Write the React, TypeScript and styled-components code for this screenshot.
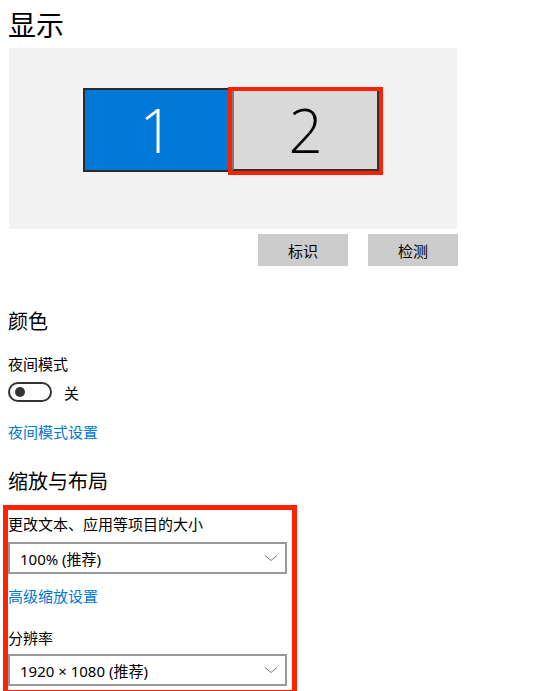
import React from 'react';
import styled, { createGlobalStyle } from 'styled-components';

const GlobalStyle = createGlobalStyle`
  html, body {
    margin: 0;
    padding: 0;
    background: #fff;
  }
  body {
    font-family: "Segoe UI", "Noto Sans", "Noto Sans CJK SC", sans-serif;
    color: #000;
  }
`;

const Page = styled.div`
  width: 550px;
  height: 691px;
  overflow: hidden;
  font-family: "Noto Sans", "Noto Sans CJK SC", sans-serif;
`;

const Title = styled.h1`
  margin: 0;
  padding: 7px 0 5px 8px;
  font-size: 28px;
  line-height: 36px;
  font-weight: 400;
`;

const Arrangement = styled.div`
  margin-left: 9px;
  width: 448px;
  height: 181px;
  box-sizing: border-box;
  padding: 39px 0 0 74px;
  background: #f2f2f2;
  display: flex;
  align-items: flex-start;
`;

const Monitor = styled.div<{ primary?: boolean }>`
  box-sizing: border-box;
  display: flex;
  align-items: center;
  justify-content: center;
  font-family: "Open Sans", "Noto Sans", sans-serif;
  font-weight: 300;
  font-size: 60px;
  line-height: 1;
  background: ${({ primary }) => (primary ? '#0078d7' : '#d9d9d9')};
  color: ${({ primary }) => (primary ? '#fff' : '#000')};
  ${({ primary }) =>
    primary
      ? `
    width: 145px;
    height: 84px;
    margin-top: 1px;
    border: 2px solid #2b2b2b;
    border-right: none;
  `
      : `
    width: 147px;
    height: 80px;
    border-left: 2px solid #7a7a7a;
    border-right: 2px solid #333;
    border-bottom: 2px solid #333;
  `}
`;

const Highlight = styled.div`
  border: 4px solid #ff2100;
  display: flex;
`;

const ButtonRow = styled.div`
  width: 458px;
  margin-top: 5px;
  display: flex;
  justify-content: flex-end;
  gap: 20px;
`;

const GrayButton = styled.button`
  width: 90px;
  height: 32px;
  border: none;
  padding: 0;
  background: #cccccc;
  font-family: "Noto Sans CJK SC", sans-serif;
  font-size: 15px;
  color: #000;
`;

const SectionTitle = styled.h2<{ gap: number }>`
  margin: ${({ gap }) => gap}px 0 0 8px;
  font-size: 20px;
  line-height: 28px;
  font-weight: 400;
  font-family: "Noto Sans CJK SC", sans-serif;
`;

const Label = styled.div<{ gap: number }>`
  margin: ${({ gap }) => gap}px 0 0 8px;
  font-size: 15px;
  line-height: 20px;
  font-family: "Noto Sans CJK SC", sans-serif;
`;

const Link = styled.a<{ gap: number }>`
  display: block;
  margin: ${({ gap }) => gap}px 0 0 8px;
  font-size: 15px;
  line-height: 20px;
  color: #0078d7;
  text-decoration: none;
  font-family: "Noto Sans CJK SC", sans-serif;
`;

const ToggleRow = styled.div`
  margin: 8px 0 0 8px;
  height: 20px;
  display: flex;
  align-items: center;
  gap: 12px;
  font-size: 15px;
  font-family: "Noto Sans CJK SC", sans-serif;
`;

const Toggle = styled.div`
  width: 44px;
  height: 20px;
  box-sizing: border-box;
  border: 2px solid #333;
  border-radius: 10px;
  display: flex;
  align-items: center;
  padding-left: 5px;
  &::before {
    content: '';
    width: 10px;
    height: 10px;
    border-radius: 50%;
    background: #333;
  }
`;

const Boxed = styled.div`
  margin: 10px 0 0 3px;
  width: 284px;
  height: 176px;
  border: 5px solid #ff2100;
  overflow: hidden;
  padding-top: 4px;
  box-sizing: content-box;
`;

const InnerLabel = styled(Label)`
  margin-left: 0;
`;

const InnerLink = styled(Link)`
  margin-left: 0;
`;

const Select = styled.div<{ gap: number }>`
  margin-top: ${({ gap }) => gap}px;
  width: 279px;
  height: 32px;
  box-sizing: border-box;
  border: 2px solid #999;
  display: flex;
  align-items: center;
  justify-content: space-between;
  padding: 0 7px 0 10px;
  font-size: 15px;
  font-family: "Noto Sans", "Noto Sans CJK SC", sans-serif;
  color: #000;
`;

const Chevron = () => (
  <svg width="14" height="8" viewBox="0 0 14 8" fill="none">
    <path d="M1 1.5 L7 6.5 L13 1.5" stroke="#777" strokeWidth="1" />
  </svg>
);

export default function App() {
  return (
    <Page>
      <GlobalStyle />
      <Title>显示</Title>
      <Arrangement>
        <Monitor primary>1</Monitor>
        <Highlight>
          <Monitor>2</Monitor>
        </Highlight>
      </Arrangement>
      <ButtonRow>
        <GrayButton>标识</GrayButton>
        <GrayButton>检测</GrayButton>
      </ButtonRow>

      <SectionTitle gap={41}>颜色</SectionTitle>
      <Label gap={19}>夜间模式</Label>
      <ToggleRow>
        <Toggle />
        <span>关</span>
      </ToggleRow>
      <Link gap={20} href="#">夜间模式设置</Link>

      <SectionTitle gap={25}>缩放与布局</SectionTitle>
      <Boxed>
        <InnerLabel gap={0}>更改文本、应用等项目的大小</InnerLabel>
        <Select gap={8}>
          <span>100% (推荐)</span>
          <Chevron />
        </Select>
        <InnerLink gap={12} href="#">高级缩放设置</InnerLink>
        <InnerLabel gap={22}>分辨率</InnerLabel>
        <Select gap={6}>
          <span>1920 × 1080 (推荐)</span>
          <Chevron />
        </Select>
      </Boxed>
    </Page>
  );
}
